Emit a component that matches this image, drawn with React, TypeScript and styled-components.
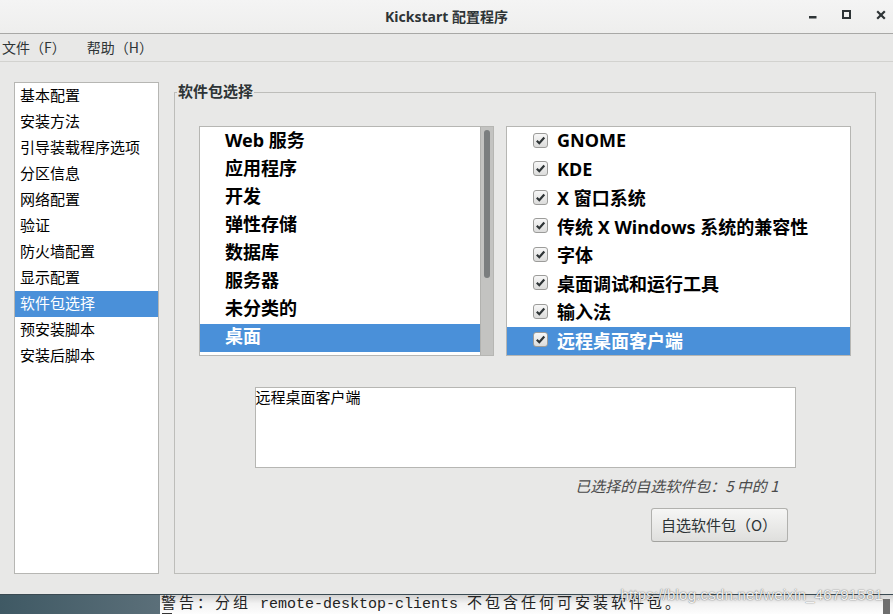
import React from 'react';
import styled, { createGlobalStyle } from 'styled-components';

const GlobalStyle = createGlobalStyle`
  html, body {
    margin: 0;
    padding: 0;
  }
  body {
    width: 893px;
    height: 614px;
    overflow: hidden;
    background: #e8e8e7;
    font-family: "Noto Sans", "Noto Sans CJK SC", sans-serif;
    color: #000;
  }
`;

const Screen = styled.div`
  position: relative;
  width: 893px;
  height: 614px;
  display: flex;
  flex-direction: column;
  overflow: hidden;
`;

const Window = styled.div`
  display: flex;
  flex-direction: column;
  height: 594px;
  background: #e8e8e7;
`;

const TitleBar = styled.div`
  height: 33px;
  border-bottom: 1px solid #a8a8a6;
  background: linear-gradient(#f4f4f4, #eeeeed);
  display: grid;
  grid-template-columns: 1fr auto 1fr;
  align-items: center;
`;

const Title = styled.div`
  grid-column: 2;
  font-family: "Noto Sans", "Noto Sans CJK SC", sans-serif;
  font-size: 14px;
  font-weight: 700;
  color: #2e3436;
  line-height: 30px;
`;

const Controls = styled.div`
  grid-column: 3;
  justify-self: end;
  align-self: start;
  display: flex;
  gap: 24px;
  padding: 10px 7px 0 0;
`;

const MenuBar = styled.div`
  height: 27px;
  border-bottom: 1px solid #d2d2cf;
  display: flex;
  align-items: center;
  gap: 21px;
  padding-left: 2px;
`;

const MenuItem = styled.span`
  font-family: "Noto Sans CJK SC", sans-serif;
  font-size: 14px;
  line-height: 25px;
  color: #2e3436;
`;

const Main = styled.div`
  flex: 1;
  display: flex;
  gap: 15px;
  padding: 20px 17px 20px 14px;
  box-sizing: border-box;
`;

const Sidebar = styled.div`
  width: 145px;
  box-sizing: border-box;
  border: 1px solid #b6b6b3;
  background: #fff;
  display: flex;
  flex-direction: column;
`;

const SideItem = styled.div<{ $active?: boolean }>`
  height: 26px;
  line-height: 23px;
  padding-left: 5px;
  box-sizing: border-box;
  font-family: "Noto Sans CJK SC", sans-serif;
  font-size: 15px;
  background: ${p => (p.$active ? '#4a90d9' : 'transparent')};
  color: ${p => (p.$active ? '#fff' : '#000')};
`;

const Frame = styled.fieldset`
  flex: 1;
  min-width: 0;
  margin: 0;
  padding: 0;
  border: 1px solid #bdbdba;
  display: flex;
  flex-direction: column;
`;

const FrameLabel = styled.legend`
  margin-left: 2px;
  padding: 0 1px 3px;
  line-height: 17px;
  font-family: "Noto Sans CJK SC", sans-serif;
  font-size: 15px;
  font-weight: 700;
  color: #2e3436;
`;

const FrameBody = styled.div`
  display: flex;
  flex-direction: column;
  align-items: center;
  padding: 24px 24px 0;
`;

const ListsRow = styled.div`
  align-self: stretch;
  display: flex;
  gap: 12px;
  height: 230px;
`;

const GroupList = styled.div`
  width: 295px;
  box-sizing: border-box;
  border: 1px solid #b6b6b3;
  background: #fff;
  display: flex;
`;

const GroupRows = styled.div`
  flex: 1;
  padding-top: 1px;
`;

const GroupRow = styled.div<{ $active?: boolean }>`
  height: 28px;
  line-height: 25px;
  padding-left: 25px;
  font-size: 18px;
  font-weight: 700;
  white-space: nowrap;
  background: ${p => (p.$active ? '#4a90d9' : 'transparent')};
  color: ${p => (p.$active ? '#fff' : '#000')};
`;

const Trough = styled.div`
  width: 13px;
  box-sizing: border-box;
  border-left: 1px solid #b2b2af;
  background: #c3c3c1;
  display: flex;
  flex-direction: column;
  align-items: center;
  padding-top: 3px;
`;

const Thumb = styled.div`
  width: 6px;
  height: 148px;
  border-radius: 3px;
  background: #7b7e7f;
`;

const OptionList = styled.div`
  flex: 1;
  box-sizing: border-box;
  border: 1px solid #b6b6b3;
  background: #fff;
`;

const OptionRow = styled.div<{ $active?: boolean }>`
  height: 28.5px;
  box-sizing: border-box;
  padding-bottom: 2px;
  display: flex;
  align-items: center;
  gap: 9px;
  padding-left: 26px;
  font-size: 18px;
  font-weight: 700;
  white-space: nowrap;
  background: ${p => (p.$active ? '#4a90d9' : 'transparent')};
  color: ${p => (p.$active ? '#fff' : '#000')};
`;

const CheckBox = styled.span`
  width: 15px;
  height: 15px;
  box-sizing: border-box;
  border: 1px solid #9c9c9a;
  border-radius: 3px;
  background: linear-gradient(#f7f7f7, #dcdcdb);
  display: flex;
  align-items: center;
  justify-content: center;
  flex-shrink: 0;
`;

const DescBox = styled.div`
  width: 541px;
  height: 81px;
  box-sizing: border-box;
  margin-top: 31px;
  border: 1px solid #b6b6b3;
  background: #fff;
  font-family: "Noto Sans CJK SC", sans-serif;
  font-size: 15px;
  line-height: 18px;
`;

const Caption = styled.div`
  width: 541px;
  box-sizing: border-box;
  margin-top: 9px;
  padding-right: 17px;
  text-align: right;
  font-family: "Noto Sans CJK SC", sans-serif;
  font-size: 15px;
  font-style: italic;
  line-height: 18px;
  color: #4a4a4a;
`;

const ButtonRow = styled.div`
  width: 541px;
  box-sizing: border-box;
  margin-top: 13px;
  padding-right: 8px;
  display: flex;
  justify-content: flex-end;
`;

const Button = styled.button`
  width: 137px;
  height: 34px;
  box-sizing: border-box;
  border: 1px solid #b1b1ae;
  border-bottom-color: #a2a29f;
  border-radius: 3px;
  background: linear-gradient(#f6f6f5, #dfdfdd);
  font-family: "Noto Sans CJK SC", sans-serif;
  font-size: 15px;
  color: #2e3436;
  padding: 0 0 2px;
`;

const BottomStrip = styled.div`
  height: 20px;
  display: flex;
  border-top: 1px solid #3a4a52;
  box-sizing: border-box;
`;

const Desktop = styled.div`
  width: 160px;
  background: linear-gradient(90deg, #3f5964, #5b6f79);
`;

const Terminal = styled.div`
  flex: 1;
  display: flex;
  background: linear-gradient(#d2d2d2, #f2f2f2 45%, #fdfdfd);
`;

const TermBody = styled.div`
  flex: 1;
  display: flex;
  flex-direction: column;
  justify-content: flex-end;
  overflow: hidden;
  padding-left: 1px;
`;

const TermLine = styled.div`
  font-family: "Liberation Mono", "Noto Sans CJK SC", monospace;
  font-size: 15px;
  line-height: 16px;
  color: #222;
  white-space: pre;
`;

const Wide = styled.span`
  font-family: "Noto Sans CJK SC", monospace;
  letter-spacing: 3px;
`;

const Cursor = styled.div`
  width: 10px;
  height: 6px;
  box-sizing: border-box;
  margin-left: 1px;
  border: 1px solid #333;
  border-bottom: none;
`;

const TermScroll = styled.div`
  width: 7px;
  margin: 4px 3px 0 0;
  background: #6e6e6e;
`;

const Watermark = styled.div`
  position: absolute;
  right: 10px;
  top: 586px;
  font-family: "Liberation Sans", sans-serif;
  font-size: 15px;
  color: rgba(255, 255, 255, 0.92);
  text-shadow: 0 0 1px rgba(0, 0, 0, 0.55), 0 0 2px rgba(0, 0, 0, 0.25);
  letter-spacing: 0.2px;
`;

const sections = [
  '基本配置',
  '安装方法',
  '引导装载程序选项',
  '分区信息',
  '网络配置',
  '验证',
  '防火墙配置',
  '显示配置',
  '软件包选择',
  '预安装脚本',
  '安装后脚本',
];

const groups = ['Web 服务', '应用程序', '开发', '弹性存储', '数据库', '服务器', '未分类的', '桌面'];

const packages = [
  'GNOME',
  'KDE',
  'X 窗口系统',
  '传统 X Windows 系统的兼容性',
  '字体',
  '桌面调试和运行工具',
  '输入法',
  '远程桌面客户端',
];

const MinimizeIcon = () => (
  <svg width="10" height="10" viewBox="0 0 10 10">
    <rect x="1" y="6" width="7.5" height="2.5" fill="#2e3436" />
  </svg>
);

const MaximizeIcon = () => (
  <svg width="10" height="10" viewBox="0 0 10 10">
    <rect x="1" y="1" width="7" height="7" fill="none" stroke="#2e3436" strokeWidth="2" />
  </svg>
);

const CloseIcon = () => (
  <svg width="10" height="10" viewBox="0 0 10 10">
    <path d="M1.2 1.2 L8.8 8.8 M8.8 1.2 L1.2 8.8" stroke="#2e3436" strokeWidth="2.2" />
  </svg>
);

const CheckMark = () => (
  <svg width="11" height="11" viewBox="0 0 11 11">
    <path d="M1.8 5.8 L4.3 8.2 L9.3 2.6" fill="none" stroke="#2e3436" strokeWidth="2.2" />
  </svg>
);

export default function App() {
  return (
    <Screen>
      <GlobalStyle />
      <Window>
        <TitleBar>
          <Title>Kickstart 配置程序</Title>
          <Controls>
            <MinimizeIcon />
            <MaximizeIcon />
            <CloseIcon />
          </Controls>
        </TitleBar>
        <MenuBar>
          <MenuItem>文件（F）</MenuItem>
          <MenuItem>帮助（H）</MenuItem>
        </MenuBar>
        <Main>
          <Sidebar>
            {sections.map(s => (
              <SideItem key={s} $active={s === '软件包选择'}>
                {s}
              </SideItem>
            ))}
          </Sidebar>
          <Frame>
            <FrameLabel>软件包选择</FrameLabel>
            <FrameBody>
              <ListsRow>
                <GroupList>
                  <GroupRows>
                    {groups.map(g => (
                      <GroupRow key={g} $active={g === '桌面'}>
                        {g}
                      </GroupRow>
                    ))}
                  </GroupRows>
                  <Trough>
                    <Thumb />
                  </Trough>
                </GroupList>
                <OptionList>
                  {packages.map(p => (
                    <OptionRow key={p} $active={p === '远程桌面客户端'}>
                      <CheckBox>
                        <CheckMark />
                      </CheckBox>
                      {p}
                    </OptionRow>
                  ))}
                </OptionList>
              </ListsRow>
              <DescBox>远程桌面客户端</DescBox>
              <Caption>已选择的自选软件包：5 中的 1</Caption>
              <ButtonRow>
                <Button>自选软件包（O）</Button>
              </ButtonRow>
            </FrameBody>
          </Frame>
        </Main>
      </Window>
      <BottomStrip>
        <Desktop />
        <Terminal>
          <TermBody>
            <TermLine>
              <Wide>警告：分组</Wide> remote-desktop-clients <Wide>不包含任何可安装软件包。</Wide>
            </TermLine>
            <Cursor />
          </TermBody>
          <TermScroll />
        </Terminal>
      </BottomStrip>
      <Watermark>https://blog.csdn.net/weixin_46791581</Watermark>
    </Screen>
  );
}
